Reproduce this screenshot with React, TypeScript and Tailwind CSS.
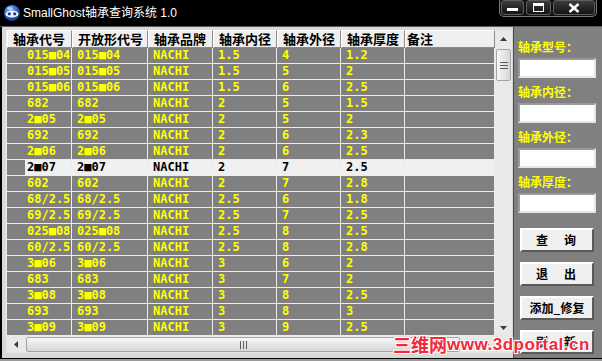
import React from "react";

const COLS = [65, 76, 65, 64, 64, 64, 90];
const HEADERS = ["轴承代号", "开放形代号", "轴承品牌", "轴承内径", "轴承外径", "轴承厚度", "备注"];
const ROWS: string[][] = [
  ["015■04", "015■04", "NACHI", "1.5", "4", "1.2"],
  ["015■05", "015■05", "NACHI", "1.5", "5", "2"],
  ["015■06", "015■06", "NACHI", "1.5", "6", "2.5"],
  ["682", "682", "NACHI", "2", "5", "1.5"],
  ["2■05", "2■05", "NACHI", "2", "5", "2"],
  ["692", "692", "NACHI", "2", "6", "2.3"],
  ["2■06", "2■06", "NACHI", "2", "6", "2.5"],
  ["2■07", "2■07", "NACHI", "2", "7", "2.5"],
  ["602", "602", "NACHI", "2", "7", "2.8"],
  ["68/2.5", "68/2.5", "NACHI", "2.5", "6", "1.8"],
  ["69/2.5", "69/2.5", "NACHI", "2.5", "7", "2.5"],
  ["025■08", "025■08", "NACHI", "2.5", "8", "2.5"],
  ["60/2.5", "60/2.5", "NACHI", "2.5", "8", "2.8"],
  ["3■06", "3■06", "NACHI", "3", "6", "2"],
  ["683", "683", "NACHI", "3", "7", "2"],
  ["3■08", "3■08", "NACHI", "3", "8", "2.5"],
  ["693", "693", "NACHI", "3", "8", "3"],
  ["3■09", "3■09", "NACHI", "3", "9", "2.5"],
];
const SELECTED = 7;

function Tri({ dir }: { dir: "up" | "down" | "left" | "right" }) {
  const pts =
    dir === "up"
      ? "0,4 7,4 3.5,0"
      : dir === "down"
      ? "0,0 7,0 3.5,4"
      : dir === "left"
      ? "4,0 4,7 0,3.5"
      : "0,0 0,7 4,3.5";
  const w = dir === "up" || dir === "down" ? 7 : 4;
  const h = dir === "up" || dir === "down" ? 4 : 7;
  return (
    <svg width={w} height={h} viewBox={`0 0 ${w} ${h}`}>
      <polygon points={pts} fill="#3a3a3a" />
    </svg>
  );
}

function Grip({ vertical }: { vertical: boolean }) {
  return vertical ? (
    <div className="flex flex-col gap-[2px]">
      <div className="w-[8px] h-[1px] bg-[#5a5a5a]" />
      <div className="w-[8px] h-[1px] bg-[#5a5a5a]" />
      <div className="w-[8px] h-[1px] bg-[#5a5a5a]" />
    </div>
  ) : (
    <div className="flex gap-[2px]">
      <div className="w-[1px] h-[8px] bg-[#5a5a5a]" />
      <div className="w-[1px] h-[8px] bg-[#5a5a5a]" />
      <div className="w-[1px] h-[8px] bg-[#5a5a5a]" />
    </div>
  );
}

function Label({ children, first }: { children: React.ReactNode; first?: boolean }) {
  return (
    <div
      className={`h-[16px] leading-[16px] text-[12px] font-bold text-[#ffff00] ${first ? "" : "mt-[6px]"}`}
    >
      {children}
    </div>
  );
}

function Input() {
  return (
    <div className="mt-[3px] h-[20px] w-[78px] bg-white border-2 border-t-[#9a9a9a] border-l-[#9a9a9a] border-r-[#e6e6e6] border-b-[#e6e6e6]" />
  );
}

function Btn({ children, first }: { children: React.ReactNode; first?: boolean }) {
  return (
    <div
      className={`${first ? "mt-[15px]" : "mt-[10px]"} ml-[2px] h-[24px] w-[74px] flex items-center justify-center bg-[#f0f0f0] border-2 border-t-white border-l-white border-r-[#5a5a5a] border-b-[#5a5a5a] text-[12px] font-bold text-black whitespace-pre`}
    >
      {children}
    </div>
  );
}

export default function App() {
  return (
    <div className="w-[602px] h-[361px] bg-black flex flex-col overflow-hidden relative font-['Noto_Sans_CJK_SC',sans-serif]">
      {/* Title bar */}
      <div className="h-[26px] flex items-center shrink-0">
        <svg className="ml-[3px]" width="18" height="18" viewBox="0 0 18 18">
          <defs>
            <radialGradient id="g" cx="40%" cy="30%" r="70%">
              <stop offset="0%" stopColor="#7fb4ff" />
              <stop offset="60%" stopColor="#2563d0" />
              <stop offset="100%" stopColor="#0d3a8f" />
            </radialGradient>
          </defs>
          <circle cx="9" cy="9" r="8" fill="url(#g)" />
          <ellipse cx="9" cy="10" rx="6.5" ry="3.6" fill="#f4f4f4" />
          <circle cx="6.3" cy="9.8" r="1.6" fill="#1b3a80" />
          <circle cx="11.7" cy="9.8" r="1.6" fill="#1b3a80" />
          <ellipse cx="7" cy="4.5" rx="3" ry="1.4" fill="#bcd8ff" opacity="0.8" />
        </svg>
        <span className="ml-[2px] text-white text-[12px] leading-none font-['Liberation_Sans','Noto_Sans_CJK_SC',sans-serif]">
          SmallGhost轴承查询系统 1.0
        </span>
        <div className="ml-auto mr-[5px] self-start h-[17px] w-[98px] flex gap-[2px] px-[1px] pb-[1px] bg-[#111] border border-t-0 border-[#7a7a7a] rounded-b-[5px]">
          <div className="w-[23px] h-[15px] rounded-[3px] border border-[#5e5e5e] bg-gradient-to-b from-[#3c3c3c] to-[#141414] flex items-center justify-center">
            <div className="w-[11px] h-[3px] bg-white mt-[4px]" />
          </div>
          <div className="w-[25px] h-[15px] rounded-[3px] border border-[#5e5e5e] bg-gradient-to-b from-[#3c3c3c] to-[#141414] flex items-center justify-center">
            <div className="w-[11px] h-[9px] border border-white border-t-[3px]" />
          </div>
          <div className="flex-1 h-[15px] rounded-[3px] border border-[#5e5e5e] bg-gradient-to-b from-[#3c3c3c] to-[#141414] flex items-center justify-center">
            <svg width="12" height="10" viewBox="0 0 12 10">
              <path d="M1.5 1 L10.5 9 M10.5 1 L1.5 9" stroke="white" strokeWidth="2.6" />
            </svg>
          </div>
        </div>
      </div>

      {/* Body */}
      <div className="flex flex-1 border-t border-[#5a5a5a] min-h-0">
        <div className="w-[513px] shrink-0 flex pl-[2px] bg-black">
          <div className="flex-1 bg-[#d9d9d9] pl-[4px] pt-[3px]">
            <div className="flex flex-col w-[506px]">
              <div className="flex h-[306px]">
                <div className="w-[489px] border-l border-[#efefef] bg-[#808080] overflow-hidden">
                  {/* header */}
                  <div className="flex h-[18px] bg-[#cfcfcf]">
                    {HEADERS.map((h, i) => (
                      <div
                        key={i}
                        style={{ width: COLS[i] }}
                        className={`shrink-0 h-[18px] border border-t-white border-l-white border-r-[#8a8a8a] border-b-[#8a8a8a] bg-[#efefef] text-[13px] leading-[16px] font-bold text-black whitespace-nowrap overflow-hidden ${i === 6 ? "pl-[1px]" : "pl-[5px]"}`}
                      >
                        {h}
                      </div>
                    ))}
                  </div>
                  {/* rows */}
                  {ROWS.map((r, ri) => {
                    const sel = ri === SELECTED;
                    return (
                      <div key={ri} className="flex h-[16px]">
                        {COLS.map((w, ci) => (
                          <div
                            key={ci}
                            style={{ width: w }}
                            className={`shrink-0 h-[16px] border-r border-b border-[#ececec] text-[12px] leading-[15px] font-bold whitespace-nowrap overflow-hidden font-['DejaVu_Sans_Mono',monospace] flex ${
                              sel ? "bg-[#f0f0f0] text-black" : "text-[#ffff00]"
                            } ${ci === 0 ? (sel ? "" : "pl-[20px]") : "pl-[5px]"}`}
                          >
                            {ci === 0 && sel ? (
                              <>
                                <div className="w-[18px] h-[15px] bg-[#808080] shrink-0" />
                                <span className="pl-[2px]">{r[0]}</span>
                              </>
                            ) : (
                              r[ci] ?? ""
                            )}
                          </div>
                        ))}
                      </div>
                    );
                  })}
                </div>
                {/* vertical scrollbar */}
                <div className="w-[17px] h-[306px] bg-[#e9e9e9] flex flex-col items-center">
                  <div className="h-[17px] w-full flex items-center justify-center">
                    <Tri dir="up" />
                  </div>
                  <div className="mt-[2px] h-[32px] w-[15px] rounded-[2px] border border-[#a4a4a4] bg-gradient-to-r from-[#f7f7f7] to-[#d6d6d6] flex items-center justify-center">
                    <Grip vertical />
                  </div>
                  <div className="flex-1" />
                  <div className="h-[17px] w-full flex items-center justify-center">
                    <Tri dir="down" />
                  </div>
                </div>
              </div>
              {/* horizontal scrollbar */}
              <div className="flex h-[17px]">
                <div className="w-[489px] bg-[#e9e9e9] flex items-center">
                  <div className="w-[19px] h-[17px] flex items-center justify-center">
                    <Tri dir="left" />
                  </div>
                  <div className="ml-[1px] w-[434px] h-[15px] rounded-[2px] border border-[#a4a4a4] bg-gradient-to-b from-[#f7f7f7] to-[#d6d6d6] flex items-center justify-center">
                    <Grip vertical={false} />
                  </div>
                  <div className="flex-1" />
                  <div className="w-[17px] h-[17px] flex items-center justify-center">
                    <Tri dir="right" />
                  </div>
                </div>
                <div className="w-[17px] h-[17px] bg-[#e9e9e9]" />
              </div>
            </div>
          </div>
        </div>

        {/* Right panel */}
        <div className="flex-1 bg-[#808080] border-l border-[#4a4a4a] pl-[4px] pt-[12px] flex flex-col">
          <Label first>轴承型号：</Label>
          <Input />
          <Label>轴承内径：</Label>
          <Input />
          <Label>轴承外径：</Label>
          <Input />
          <Label>轴承厚度：</Label>
          <Input />
          <Btn first>
            <span className="tracking-[2px]">查　询</span>
          </Btn>
          <Btn>
            <span className="tracking-[2px]">退　出</span>
          </Btn>
          <Btn>添加_修复</Btn>
          <Btn>
            <span className="tracking-[2px]">刷　新</span>
          </Btn>
        </div>
      </div>
      <div className="h-[1px] bg-black shrink-0" />
      <div className="h-[2px] bg-[#9a9a9a] shrink-0" />

      {/* watermark */}
      <div className="absolute left-[393px] top-[335px] flex items-end leading-none text-[#ee2a3c] font-bold [text-shadow:1px_1px_0_#fff,-1px_-1px_0_#fff,1px_-1px_0_#fff,-1px_1px_0_#fff,0_0_3px_#ff8a95]">
        <span className="text-[18px] font-['Noto_Sans_CJK_SC',sans-serif]">三维网</span>
        <span className="text-[17px] font-['Liberation_Sans',sans-serif] tracking-[0.5px]">www.3dportal.cn</span>
      </div>
    </div>
  );
}
